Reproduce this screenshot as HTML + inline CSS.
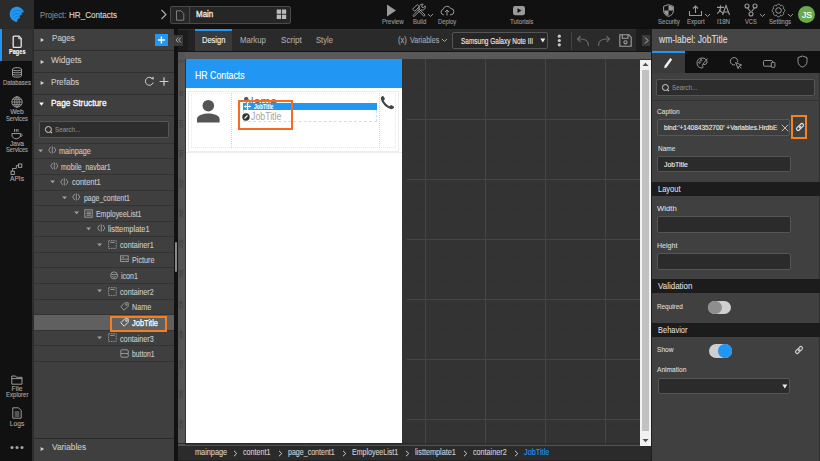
<!DOCTYPE html>
<html><head><meta charset="utf-8">
<style>
*{box-sizing:border-box;margin:0;padding:0}
html,body{width:820px;height:461px;overflow:hidden;background:#111;font-family:"Liberation Sans",sans-serif;position:relative}
.a{position:absolute}
.t{white-space:nowrap}
svg{overflow:visible}
</style></head><body>
<div class="a" style="left:0px;top:0px;width:820px;height:29px;background:#111;"></div>
<div class="a" style="left:0px;top:0px;width:34px;height:29px;background:#2b2b2b;"></div>
<div class="a" style="left:0px;top:29px;width:32px;height:432px;background:#111111;"></div>
<div class="a" style="left:32px;top:29px;width:2px;height:432px;background:#2e2e2e;"></div>
<div class="a" style="left:0px;top:29px;width:32px;height:32px;background:#333;"></div>
<div class="a" style="left:0px;top:29px;width:2px;height:32px;background:#2196f3;"></div>
<svg class="a" style="left:0px;top:0px;" width="34" height="29" viewBox="0 0 34 29"><path fill="#2196f3" d="M16.8 22 C13.5 21.5 10 18.8 9.7 14.5 C9.5 10 12.8 6.8 16.5 6.7 C20 6.6 23 9 24 12.3 C23 12 22 12.2 21.3 13 C21.6 13.6 22 14.4 22 15 C21 14.8 20 15.2 19.4 16 C19.8 16.8 20.1 17.5 20 18.2 C19 18 18.2 18.4 17.6 19 C17.8 20 17.6 21.2 16.8 22 Z"/><path d="M11.5 13.5 C13 10.5 17.5 9.5 22 11.5 M12.5 16.5 C14 13.5 17.5 12.8 20.5 14.5 M14 19 C15 16.5 17 16 18.8 17" stroke="#1a6fc0" stroke-width="0.6" fill="none"/></svg>
<div class="a t" style="left:39.90px;top:10.65px;font-size:8.86px;line-height:8.86px;color:#8a8a8a;transform:scaleX(0.879);transform-origin:0 0;-webkit-text-stroke:0.12px #8a8a8a;">Project:</div>
<div class="a t" style="left:68.80px;top:10.65px;font-size:8.86px;line-height:8.86px;color:#dadada;transform:scaleX(0.913);transform-origin:0 0;-webkit-text-stroke:0.12px #dadada;">HR_Contacts</div>
<svg class="a" style="left:160px;top:9px;" width="8" height="11" viewBox="0 0 8 11"><path d="M1.5 1 L6 5.5 L1.5 10" stroke="#aaa" stroke-width="1.2" fill="none"/></svg>
<div class="a" style="left:170px;top:6px;width:121px;height:17.5px;background:#262626;border:1px solid #4a4a4a;border-radius:2px;"></div>
<div class="a" style="left:189px;top:7px;width:1px;height:15.5px;background:#4a4a4a;"></div>
<svg class="a" style="left:175px;top:10px;" width="10" height="11" viewBox="0 0 10 11"><path d="M1.5 0.8 H6 L8.8 3.6 V10.2 H1.5 Z" stroke="#888" stroke-width="0.9" fill="none"/></svg>
<div class="a t" style="left:195.70px;top:10.38px;font-size:9.18px;line-height:9.18px;color:#f0f0f0;transform:scaleX(0.868);transform-origin:0 0;-webkit-text-stroke:0.3px #f0f0f0;">Main</div>
<svg class="a" style="left:276px;top:9px;" width="11" height="11" viewBox="0 0 11 11"><g fill="#bbb"><rect x="0.7" y="0.5" width="4.3" height="4.3"/><rect x="5.9" y="0.5" width="4.3" height="4.3"/><rect x="0.7" y="5.7" width="4.3" height="4.3"/><rect x="5.9" y="5.7" width="4.3" height="4.3"/></g></svg>
<svg class="a" style="left:386px;top:4px;" width="11" height="13" viewBox="0 0 11 13"><path d="M1 0.6 L10 6.5 L1 12.4 Z" fill="#9a9a9a"/></svg>
<div class="a t" style="left:381.60px;top:18.04px;font-size:7.34px;line-height:7.34px;color:#9a9a9a;transform:scaleX(0.827);transform-origin:0 0;-webkit-text-stroke:0.12px #9a9a9a;">Preview</div>
<svg class="a" style="left:412px;top:3.5px;" width="14" height="13" viewBox="0 0 14 13"><g stroke="#9a9a9a" stroke-width="0.95" fill="none" stroke-linejoin="round"><path d="M5.2 5.6 L11.9 12.3 L13.1 11.1 L6.4 4.4"/><path d="M0.6 5.2 L5.2 0.6 L7.3 2.7 L2.7 7.3 Z"/><path d="M7.6 4.8 L1.2 11.2 C0.9 11.6 0.9 12 1.3 12.3 C1.6 12.6 2 12.6 2.4 12.3 L8.8 5.9 C10.4 6.6 12.4 5.9 13.1 4.2 C13.4 3.4 13.4 2.6 13.1 1.9 L11.3 3.6 L9.9 3.2 L9.6 1.8 L11.3 0.4 C10.5 0.1 9.6 0.1 8.8 0.5 C7.3 1.3 6.8 3.3 7.6 4.8 Z"/></g></svg>
<svg class="a" style="left:427px;top:13px;" width="7" height="5" viewBox="0 0 7 5"><path d="M1 1 L3.5 3.5 L6 1" stroke="#9a9a9a" stroke-width="1" fill="none"/></svg>
<div class="a t" style="left:412.70px;top:18.04px;font-size:7.34px;line-height:7.34px;color:#9a9a9a;transform:scaleX(0.814);transform-origin:0 0;-webkit-text-stroke:0.12px #9a9a9a;">Build</div>
<svg class="a" style="left:440px;top:4px;" width="14" height="12" viewBox="0 0 14 12"><g stroke="#9a9a9a" stroke-width="1" fill="none"><path d="M4 10.8 H3.5 A2.8 2.8 0 0 1 3.2 5.3 A4 4 0 0 1 10.7 4.5 A3 3 0 0 1 10.8 10.8 H10"/><path d="M7 11.5 V6 M5 8 L7 6 L9 8"/></g></svg>
<div class="a t" style="left:437.70px;top:18.04px;font-size:7.34px;line-height:7.34px;color:#9a9a9a;transform:scaleX(0.800);transform-origin:0 0;-webkit-text-stroke:0.12px #9a9a9a;">Deploy</div>
<svg class="a" style="left:512px;top:5px;" width="14" height="11" viewBox="0 0 14 11"><rect x="1" y="1" width="12" height="9.2" rx="2.2" fill="#9a9a9a"/><path d="M5.5 3.3 L9.5 5.6 L5.5 7.9 Z" fill="#111"/></svg>
<div class="a t" style="left:509.60px;top:17.74px;font-size:7.34px;line-height:7.34px;color:#9a9a9a;transform:scaleX(0.843);transform-origin:0 0;-webkit-text-stroke:0.12px #9a9a9a;">Tutorials</div>
<svg class="a" style="left:662.5px;top:3.5px;" width="12" height="14" viewBox="0 0 12 14"><path d="M5.5 0.6 L10.4 2.3 V6.8 C10.4 9.8 8.2 11.6 5.5 12.4 C2.8 11.6 0.6 9.8 0.6 6.8 V2.3 Z" fill="none" stroke="#9a9a9a" stroke-width="1"/><path d="M5.5 1.2 L9.9 2.7 V6.6 H5.5 Z M5.5 6.6 V11.8 C3.2 11 1.3 9.5 1.1 6.6 Z" fill="#9a9a9a"/></svg>
<div class="a t" style="left:658.40px;top:18.14px;font-size:7.34px;line-height:7.34px;color:#9a9a9a;transform:scaleX(0.823);transform-origin:0 0;-webkit-text-stroke:0.12px #9a9a9a;">Security</div>
<svg class="a" style="left:688px;top:5px;" width="15" height="12" viewBox="0 0 15 12"><g stroke="#9a9a9a" stroke-width="1.1" fill="none"><path d="M1.5 6 V10.5 H13.5 V6"/><path d="M7.5 8 V1 M5 3.5 L7.5 1 L10 3.5"/></g></svg>
<svg class="a" style="left:704px;top:13px;" width="7" height="5" viewBox="0 0 7 5"><path d="M1 1 L3.5 3.5 L6 1" stroke="#9a9a9a" stroke-width="1" fill="none"/></svg>
<div class="a t" style="left:687.20px;top:18.14px;font-size:7.34px;line-height:7.34px;color:#9a9a9a;transform:scaleX(0.830);transform-origin:0 0;-webkit-text-stroke:0.12px #9a9a9a;">Export</div>
<svg class="a" style="left:716px;top:4px;" width="15" height="12" viewBox="0 0 15 12"><g stroke="#9a9a9a" stroke-width="1.1" fill="none" stroke-linejoin="miter"><path d="M1 3.4 H8 M4.5 1.2 V3.4 M4.6 3.4 C4.2 6.5 3 8.6 1 9.6 M3.2 5.6 C4.6 7.6 6.2 8.8 7.6 9.4"/><path d="M6.6 11 L10 1.6 L13.6 11 M7.8 8 H12.4"/></g></svg>
<div class="a t" style="left:717.00px;top:18.14px;font-size:7.34px;line-height:7.34px;color:#9a9a9a;transform:scaleX(0.846);transform-origin:0 0;-webkit-text-stroke:0.12px #9a9a9a;">I18N</div>
<svg class="a" style="left:744px;top:3px;" width="14" height="14" viewBox="0 0 14 14"><g stroke="#9a9a9a" stroke-width="1.1" fill="none"><circle cx="3" cy="3" r="2"/><circle cx="11" cy="3" r="2"/><circle cx="7" cy="11" r="2"/><path d="M3.5 5 L6.5 8.5 M10.5 5 L7.5 8.5"/></g></svg>
<svg class="a" style="left:759px;top:13px;" width="7" height="5" viewBox="0 0 7 5"><path d="M1 1 L3.5 3.5 L6 1" stroke="#9a9a9a" stroke-width="1" fill="none"/></svg>
<div class="a t" style="left:745.40px;top:18.14px;font-size:7.34px;line-height:7.34px;color:#9a9a9a;transform:scaleX(0.776);transform-origin:0 0;-webkit-text-stroke:0.12px #9a9a9a;">VCS</div>
<svg class="a" style="left:771px;top:2.5px;" width="15" height="15" viewBox="0 0 15 15"><g stroke="#9a9a9a" stroke-width="1" fill="none" stroke-linejoin="round"><path d="M13.80 7.50 L13.78 7.77 L13.74 8.05 L13.66 8.31 L13.54 8.57 L13.40 8.81 L13.22 9.03 L12.99 9.23 L12.71 9.40 L12.12 9.41 L12.52 9.84 L12.61 10.16 L12.63 10.46 L12.60 10.75 L12.53 11.02 L12.43 11.28 L12.30 11.52 L12.14 11.75 L11.95 11.95 L11.75 12.14 L11.52 12.30 L11.28 12.43 L11.02 12.53 L10.75 12.60 L10.46 12.63 L10.16 12.61 L9.84 12.52 L9.41 12.12 L9.40 12.71 L9.23 12.99 L9.03 13.22 L8.81 13.40 L8.57 13.54 L8.31 13.66 L8.05 13.74 L7.77 13.78 L7.50 13.80 L7.23 13.78 L6.95 13.74 L6.69 13.66 L6.43 13.54 L6.19 13.40 L5.97 13.22 L5.77 12.99 L5.60 12.71 L5.59 12.12 L5.16 12.52 L4.84 12.61 L4.54 12.63 L4.25 12.60 L3.98 12.53 L3.72 12.43 L3.48 12.30 L3.25 12.14 L3.05 11.95 L2.86 11.75 L2.70 11.52 L2.57 11.28 L2.47 11.02 L2.40 10.75 L2.37 10.46 L2.39 10.16 L2.48 9.84 L2.88 9.41 L2.29 9.40 L2.01 9.23 L1.78 9.03 L1.60 8.81 L1.46 8.57 L1.34 8.31 L1.26 8.05 L1.22 7.77 L1.20 7.50 L1.22 7.23 L1.26 6.95 L1.34 6.69 L1.46 6.43 L1.60 6.19 L1.78 5.97 L2.01 5.77 L2.29 5.60 L2.88 5.59 L2.48 5.16 L2.39 4.84 L2.37 4.54 L2.40 4.25 L2.47 3.98 L2.57 3.72 L2.70 3.48 L2.86 3.25 L3.05 3.05 L3.25 2.86 L3.48 2.70 L3.72 2.57 L3.98 2.47 L4.25 2.40 L4.54 2.37 L4.84 2.39 L5.16 2.48 L5.59 2.88 L5.60 2.29 L5.77 2.01 L5.97 1.78 L6.19 1.60 L6.43 1.46 L6.69 1.34 L6.95 1.26 L7.23 1.22 L7.50 1.20 L7.77 1.22 L8.05 1.26 L8.31 1.34 L8.57 1.46 L8.81 1.60 L9.03 1.78 L9.23 2.01 L9.40 2.29 L9.41 2.88 L9.84 2.48 L10.16 2.39 L10.46 2.37 L10.75 2.40 L11.02 2.47 L11.28 2.57 L11.52 2.70 L11.75 2.86 L11.95 3.05 L12.14 3.25 L12.30 3.48 L12.43 3.72 L12.53 3.98 L12.60 4.25 L12.63 4.54 L12.61 4.84 L12.52 5.16 L12.12 5.59 L12.71 5.60 L12.99 5.77 L13.22 5.97 L13.40 6.19 L13.54 6.43 L13.66 6.69 L13.74 6.95 L13.78 7.23 L13.80 7.50Z"/><circle cx="7.5" cy="7.5" r="2.8"/></g></svg>
<svg class="a" style="left:787px;top:13px;" width="7" height="5" viewBox="0 0 7 5"><path d="M1 1 L3.5 3.5 L6 1" stroke="#9a9a9a" stroke-width="1" fill="none"/></svg>
<div class="a t" style="left:769.00px;top:18.14px;font-size:7.34px;line-height:7.34px;color:#9a9a9a;transform:scaleX(0.837);transform-origin:0 0;-webkit-text-stroke:0.12px #9a9a9a;">Settings</div>
<svg class="a" style="left:797px;top:5px;" width="19" height="19" viewBox="0 0 19 19"><circle cx="9.5" cy="9.5" r="8.5" fill="#6aaa4c"/></svg>
<div class="a t" style="left:801.50px;top:11.37px;font-size:9.07px;line-height:9.07px;color:#fff;transform:scaleX(0.946);transform-origin:0 0;-webkit-text-stroke:0.2px #fff;">JS</div>
<svg class="a" style="left:11px;top:35px;" width="12" height="14" viewBox="0 0 12 14"><path d="M2.2 2 C2.2 1.5 2.5 1.2 3 1.2 H8 L10.2 3.4 V11.6 C10.2 12.1 9.9 12.4 9.4 12.4 H3 C2.5 12.4 2.2 12.1 2.2 11.6 Z" fill="none" stroke="#e8e8e8" stroke-width="1.3"/><path d="M7.6 1.5 V3.8 H10" fill="none" stroke="#e8e8e8" stroke-width="0.8"/></svg>
<div class="a t" style="left:8.75px;top:49.21px;font-size:7.13px;line-height:7.13px;color:#fff;font-weight:bold;transform:scaleX(0.786);transform-origin:0 0;-webkit-text-stroke:0.12px #fff;">Pages</div>
<svg class="a" style="left:11px;top:67px;" width="12" height="11" viewBox="0 0 12 11"><g stroke="#a8a8a8" stroke-width="0.9" fill="none"><ellipse cx="6" cy="2.2" rx="4.5" ry="1.6"/><path d="M1.5 2.2 V8.8 C1.5 10.6 10.5 10.6 10.5 8.8 V2.2"/><path d="M1.5 4.6 C1.5 6.2 10.5 6.2 10.5 4.6 M1.5 6.8 C1.5 8.4 10.5 8.4 10.5 6.8"/></g></svg>
<div class="a t" style="left:3.00px;top:80.28px;font-size:6.7px;line-height:6.7px;color:#a8a8a8;transform:scaleX(0.874);transform-origin:0 0;-webkit-text-stroke:0.12px #a8a8a8;">Databases</div>
<svg class="a" style="left:11px;top:96px;" width="12" height="12" viewBox="0 0 12 12"><g stroke="#a8a8a8" stroke-width="0.8" fill="none"><circle cx="6" cy="6" r="5.2"/><ellipse cx="6" cy="6" rx="2.3" ry="5.2"/><path d="M0.8 6 H11.2 M1.6 3.3 H10.4 M1.6 8.7 H10.4 M6 0.8 V11.2"/></g></svg>
<div class="a t" style="left:10.17px;top:108.58px;font-size:6.7px;line-height:6.7px;color:#a8a8a8;-webkit-text-stroke:0.12px #a8a8a8;">Web</div>
<div class="a t" style="left:6.00px;top:115.58px;font-size:6.7px;line-height:6.7px;color:#a8a8a8;transform:scaleX(0.856);transform-origin:0 0;-webkit-text-stroke:0.12px #a8a8a8;">Services</div>
<svg class="a" style="left:10px;top:128px;" width="14" height="12" viewBox="0 0 14 12"><g stroke="#a8a8a8" stroke-width="0.9" fill="none"><path d="M2 5.5 H10.5 V7 C10.5 9.5 8.5 10.8 6.2 10.8 C4 10.8 2 9.5 2 7 Z"/><path d="M10.5 6 C12.8 6 12.8 8.6 10.2 8.6"/><path d="M4.5 1 V3.8 M6.3 1 V3.8 M8 1 V3.8"/></g></svg>
<div class="a t" style="left:9.91px;top:141.08px;font-size:6.7px;line-height:6.7px;color:#a8a8a8;-webkit-text-stroke:0.12px #a8a8a8;">Java</div>
<div class="a t" style="left:6.00px;top:147.48px;font-size:6.7px;line-height:6.7px;color:#a8a8a8;transform:scaleX(0.856);transform-origin:0 0;-webkit-text-stroke:0.12px #a8a8a8;">Services</div>
<svg class="a" style="left:10px;top:163px;" width="13" height="13" viewBox="0 0 13 13"><g stroke="#a8a8a8" stroke-width="0.9" fill="none"><rect x="1" y="8.2" width="3.3" height="3.3"/><rect x="8.5" y="1" width="3.3" height="3.3"/><path d="M2.6 8.2 V5.5 H6.3 V2.6 H8.5"/></g></svg>
<div class="a t" style="left:9.93px;top:176.28px;font-size:6.7px;line-height:6.7px;color:#a8a8a8;-webkit-text-stroke:0.12px #a8a8a8;">APIs</div>
<svg class="a" style="left:11px;top:375px;" width="12" height="10" viewBox="0 0 12 10"><path d="M0.8 1 H4.5 L5.5 2.3 H11 V9.2 H0.8 Z M0.8 3.6 H11" fill="none" stroke="#a8a8a8" stroke-width="0.9"/></svg>
<div class="a t" style="left:11.61px;top:385.98px;font-size:6.7px;line-height:6.7px;color:#a8a8a8;-webkit-text-stroke:0.12px #a8a8a8;">File</div>
<div class="a t" style="left:5.75px;top:392.28px;font-size:6.7px;line-height:6.7px;color:#a8a8a8;transform:scaleX(0.902);transform-origin:0 0;-webkit-text-stroke:0.12px #a8a8a8;">Explorer</div>
<svg class="a" style="left:12px;top:407px;" width="10" height="12" viewBox="0 0 10 12"><g stroke="#a8a8a8" stroke-width="0.9" fill="none"><path d="M0.8 0.8 H6.5 L9.2 3.5 V11.2 H0.8 Z"/><path d="M2.7 5 H7.3 M2.7 7 H7.3 M2.7 9 H7.3"/></g></svg>
<div class="a t" style="left:9.73px;top:420.98px;font-size:6.7px;line-height:6.7px;color:#a8a8a8;-webkit-text-stroke:0.12px #a8a8a8;">Logs</div>
<svg class="a" style="left:10px;top:445px;" width="14" height="5" viewBox="0 0 14 5"><g fill="#a8a8a8"><circle cx="2" cy="2.5" r="1.5"/><circle cx="7" cy="2.5" r="1.5"/><circle cx="12" cy="2.5" r="1.5"/></g></svg>
<div class="a" style="left:34px;top:29px;width:140px;height:432px;background:#3f3f3f;"></div>
<div class="a" style="left:34px;top:50px;width:140px;height:1px;background:#2f2f2f;"></div>
<div class="a" style="left:34px;top:72px;width:140px;height:1px;background:#2f2f2f;"></div>
<div class="a" style="left:34px;top:93.5px;width:140px;height:1px;background:#2f2f2f;"></div>
<div class="a" style="left:34px;top:115px;width:140px;height:1px;background:#2f2f2f;"></div>
<svg class="a" style="left:40px;top:36.5px;" width="5" height="6" viewBox="0 0 5 6"><path d="M0.6 0.9 L4.2 3 L0.6 5.1 Z" fill="#d0d0d0"/></svg>
<div class="a t" style="left:51.60px;top:34.29px;font-size:9.29px;line-height:9.29px;color:#c8c8c8;transform:scaleX(0.869);transform-origin:0 0;-webkit-text-stroke:0.12px #c8c8c8;">Pages</div>
<div class="a" style="left:155.3px;top:33.7px;width:12.7px;height:12px;background:#2196f3;"></div>
<svg class="a" style="left:155.3px;top:33.7px;" width="13" height="12" viewBox="0 0 13 12"><path d="M6.4 2.5 V9.5 M2.9 6 H9.9" stroke="#fff" stroke-width="1.4"/></svg>
<svg class="a" style="left:40px;top:58.5px;" width="5" height="6" viewBox="0 0 5 6"><path d="M0.6 0.9 L4.2 3 L0.6 5.1 Z" fill="#d0d0d0"/></svg>
<div class="a t" style="left:51.30px;top:55.89px;font-size:9.29px;line-height:9.29px;color:#c8c8c8;transform:scaleX(0.909);transform-origin:0 0;-webkit-text-stroke:0.12px #c8c8c8;">Widgets</div>
<svg class="a" style="left:40px;top:80px;" width="5" height="6" viewBox="0 0 5 6"><path d="M0.6 0.9 L4.2 3 L0.6 5.1 Z" fill="#d0d0d0"/></svg>
<div class="a t" style="left:51.30px;top:77.59px;font-size:9.29px;line-height:9.29px;color:#c8c8c8;transform:scaleX(0.875);transform-origin:0 0;-webkit-text-stroke:0.12px #c8c8c8;">Prefabs</div>
<svg class="a" style="left:144px;top:76px;" width="11" height="10" viewBox="0 0 11 10"><path d="M8.8 3.2 A4 4 0 1 0 9.2 6.5" stroke="#ccc" stroke-width="1" fill="none"/><path d="M6.6 2.8 L9.6 3.6 L9.6 0.6 Z" fill="#ccc"/></svg>
<svg class="a" style="left:158.5px;top:76.5px;" width="10" height="9" viewBox="0 0 10 9"><path d="M5 0.3 V8.7 M0.6 4.5 H9.4" stroke="#ccc" stroke-width="1.2"/></svg>
<svg class="a" style="left:38.5px;top:101.5px;" width="5" height="4" viewBox="0 0 5 4"><path d="M0.2 0.5 H4.8 L2.5 3.8 Z" fill="#fff"/></svg>
<div class="a t" style="left:51.30px;top:98.31px;font-size:9.5px;line-height:9.5px;color:#ffffff;transform:scaleX(0.876);transform-origin:0 0;-webkit-text-stroke:0.3px #fff;">Page Structure</div>
<div class="a" style="left:39px;top:121.3px;width:130px;height:16.4px;background:#2d2d2d;border:1px solid #555;border-radius:2px;"></div>
<svg class="a" style="left:44px;top:125px;" width="9" height="9" viewBox="0 0 9 9"><circle cx="4.4" cy="4.5" r="3" stroke="#d0d0d0" stroke-width="1" fill="none"/><path d="M6.4 6.6 L8 8.2" stroke="#d0d0d0" stroke-width="1.1"/></svg>
<div class="a t" style="left:54.80px;top:125.69px;font-size:7.99px;line-height:7.99px;color:#8c8c8c;transform:scaleX(0.788);transform-origin:0 0;-webkit-text-stroke:0.12px #8c8c8c;">Search...</div>
<div class="a" style="left:34px;top:143.3px;width:140px;height:1px;background:#333;"></div>
<div class="a" style="left:34px;top:158.37px;width:140px;height:1px;background:#333;"></div>
<svg class="a" style="left:37.800000000000004px;top:149.20000000000002px;" width="5.2" height="4" viewBox="0 0 5.2 4"><path d="M0.2 0.5 H5.0 L2.6 3.2 Z" fill="#a0a0a0"/></svg>
<svg class="a" style="left:48.4px;top:146.4px;" width="9" height="8" viewBox="0 0 9 8"><g stroke="#a0a0a0" stroke-width="0.85" fill="none"><path d="M2.7 1 L0.7 4 L2.7 7 M5.9 1 L7.9 4 L5.9 7 M4.3 0.3 V7.6"/></g></svg>
<div class="a t" style="left:59.30px;top:147.01px;font-size:8.32px;line-height:8.32px;color:#c8c8c8;transform:scaleX(0.871);transform-origin:0 0;-webkit-text-stroke:0.12px #c8c8c8;">mainpage</div>
<div class="a" style="left:34px;top:173.94px;width:140px;height:1px;background:#333;"></div>
<svg class="a" style="left:50px;top:161.97px;" width="9" height="8" viewBox="0 0 9 8"><g stroke="#a0a0a0" stroke-width="0.85" fill="none"><path d="M2.7 1 L0.7 4 L2.7 7 M5.9 1 L7.9 4 L5.9 7 M4.3 0.3 V7.6"/></g></svg>
<div class="a t" style="left:60.80px;top:162.65px;font-size:8.32px;line-height:8.32px;color:#c8c8c8;transform:scaleX(0.841);transform-origin:0 0;-webkit-text-stroke:0.12px #c8c8c8;">mobile_navbar1</div>
<div class="a" style="left:34px;top:189.51px;width:140px;height:1px;background:#333;"></div>
<svg class="a" style="left:49.6px;top:180.34px;" width="5.2" height="4" viewBox="0 0 5.2 4"><path d="M0.2 0.5 H5.0 L2.6 3.2 Z" fill="#a0a0a0"/></svg>
<svg class="a" style="left:60.3px;top:177.54px;" width="9" height="8" viewBox="0 0 9 8"><g stroke="#a0a0a0" stroke-width="0.85" fill="none"><path d="M2.7 1 L0.7 4 L2.7 7 M5.9 1 L7.9 4 L5.9 7 M4.3 0.3 V7.6"/></g></svg>
<div class="a t" style="left:71.60px;top:178.29px;font-size:8.32px;line-height:8.32px;color:#c8c8c8;transform:scaleX(0.903);transform-origin:0 0;-webkit-text-stroke:0.12px #c8c8c8;">content1</div>
<div class="a" style="left:34px;top:205.08px;width:140px;height:1px;background:#333;"></div>
<svg class="a" style="left:61.7px;top:195.91000000000003px;" width="5.2" height="4" viewBox="0 0 5.2 4"><path d="M0.2 0.5 H5.0 L2.6 3.2 Z" fill="#a0a0a0"/></svg>
<svg class="a" style="left:72.3px;top:193.11px;" width="9" height="8" viewBox="0 0 9 8"><g stroke="#a0a0a0" stroke-width="0.85" fill="none"><path d="M2.7 1 L0.7 4 L2.7 7 M5.9 1 L7.9 4 L5.9 7 M4.3 0.3 V7.6"/></g></svg>
<div class="a t" style="left:83.50px;top:193.93px;font-size:8.32px;line-height:8.32px;color:#c8c8c8;transform:scaleX(0.836);transform-origin:0 0;-webkit-text-stroke:0.12px #c8c8c8;">page_content1</div>
<div class="a" style="left:34px;top:220.65px;width:140px;height:1px;background:#333;"></div>
<svg class="a" style="left:74.0px;top:211.48000000000002px;" width="5.2" height="4" viewBox="0 0 5.2 4"><path d="M0.2 0.5 H5.0 L2.6 3.2 Z" fill="#a0a0a0"/></svg>
<svg class="a" style="left:84.2px;top:208.68px;" width="9" height="9" viewBox="0 0 9 9"><g stroke="#a0a0a0" stroke-width="0.9" fill="none"><rect x="0.8" y="0.8" width="7.4" height="7.4"/><path d="M2.5 3 H7 M2.5 4.6 H7 M2.5 6.2 H7"/></g></svg>
<div class="a t" style="left:95.50px;top:209.57px;font-size:8.32px;line-height:8.32px;color:#c8c8c8;transform:scaleX(0.834);transform-origin:0 0;-webkit-text-stroke:0.12px #c8c8c8;">EmployeeList1</div>
<div class="a" style="left:34px;top:236.22px;width:140px;height:1px;background:#333;"></div>
<svg class="a" style="left:86.0px;top:227.05px;" width="5.2" height="4" viewBox="0 0 5.2 4"><path d="M0.2 0.5 H5.0 L2.6 3.2 Z" fill="#a0a0a0"/></svg>
<svg class="a" style="left:96.8px;top:224.25px;" width="9" height="8" viewBox="0 0 9 8"><g stroke="#a0a0a0" stroke-width="0.85" fill="none"><path d="M2.7 1 L0.7 4 L2.7 7 M5.9 1 L7.9 4 L5.9 7 M4.3 0.3 V7.6"/></g></svg>
<div class="a t" style="left:107.60px;top:225.21px;font-size:8.32px;line-height:8.32px;color:#c8c8c8;transform:scaleX(0.890);transform-origin:0 0;-webkit-text-stroke:0.12px #c8c8c8;">listtemplate1</div>
<div class="a" style="left:34px;top:251.79000000000002px;width:140px;height:1px;background:#333;"></div>
<svg class="a" style="left:97.3px;top:242.62000000000003px;" width="5.2" height="4" viewBox="0 0 5.2 4"><path d="M0.2 0.5 H5.0 L2.6 3.2 Z" fill="#a0a0a0"/></svg>
<svg class="a" style="left:108.4px;top:239.82000000000002px;" width="9" height="9" viewBox="0 0 9 9"><g stroke="#a0a0a0" stroke-width="0.8" fill="none"><rect x="0.6" y="0.6" width="7.6" height="7.8" stroke-dasharray="1.6 0.8"/><path d="M2.2 2.4 H6.6" stroke-width="0.9"/></g></svg>
<div class="a t" style="left:119.70px;top:240.85px;font-size:8.32px;line-height:8.32px;color:#c8c8c8;transform:scaleX(0.870);transform-origin:0 0;-webkit-text-stroke:0.12px #c8c8c8;">container1</div>
<div class="a" style="left:34px;top:267.36px;width:140px;height:1px;background:#333;"></div>
<svg class="a" style="left:120.2px;top:255.39000000000001px;" width="9" height="8" viewBox="0 0 9 8"><g stroke="#a0a0a0" stroke-width="0.85" fill="none"><rect x="0.6" y="0.8" width="7.6" height="5.8"/><path d="M0.6 4.2 H8.2 M2 2.4 H4"/></g></svg>
<div class="a t" style="left:131.50px;top:256.49px;font-size:8.32px;line-height:8.32px;color:#c8c8c8;transform:scaleX(0.870);transform-origin:0 0;-webkit-text-stroke:0.12px #c8c8c8;">Picture</div>
<div class="a" style="left:34px;top:282.93px;width:140px;height:1px;background:#333;"></div>
<svg class="a" style="left:109.8px;top:270.96000000000004px;" width="9" height="9" viewBox="0 0 9 9"><g stroke="#a0a0a0" stroke-width="0.85" fill="none"><circle cx="4.1" cy="4.4" r="3.5"/><path d="M1.2 3.6 H7 M2.4 5.4 C3.2 6.4 5 6.4 5.8 5.4"/></g></svg>
<div class="a t" style="left:120.80px;top:272.13px;font-size:8.32px;line-height:8.32px;color:#c8c8c8;transform:scaleX(0.850);transform-origin:0 0;-webkit-text-stroke:0.12px #c8c8c8;">icon1</div>
<div class="a" style="left:34px;top:298.5px;width:140px;height:1px;background:#333;"></div>
<svg class="a" style="left:97.3px;top:289.33px;" width="5.2" height="4" viewBox="0 0 5.2 4"><path d="M0.2 0.5 H5.0 L2.6 3.2 Z" fill="#a0a0a0"/></svg>
<svg class="a" style="left:108.4px;top:286.53000000000003px;" width="9" height="9" viewBox="0 0 9 9"><g stroke="#a0a0a0" stroke-width="0.8" fill="none"><rect x="0.6" y="0.6" width="7.6" height="7.8" stroke-dasharray="1.6 0.8"/><path d="M2.2 2.4 H6.6" stroke-width="0.9"/></g></svg>
<div class="a t" style="left:119.70px;top:287.77px;font-size:8.32px;line-height:8.32px;color:#c8c8c8;transform:scaleX(0.870);transform-origin:0 0;-webkit-text-stroke:0.12px #c8c8c8;">container2</div>
<div class="a" style="left:34px;top:314.07px;width:140px;height:1px;background:#333;"></div>
<svg class="a" style="left:120.2px;top:302.1px;" width="9" height="9" viewBox="0 0 9 9"><g stroke="#a0a0a0" stroke-width="0.9" fill="none"><path d="M4.8 0.8 H8.2 V4.2 L4.2 8.2 L0.8 4.8 Z"/><circle cx="6.3" cy="2.7" r="0.7"/></g></svg>
<div class="a t" style="left:131.50px;top:303.41px;font-size:8.32px;line-height:8.32px;color:#c8c8c8;transform:scaleX(0.864);transform-origin:0 0;-webkit-text-stroke:0.12px #c8c8c8;">Name</div>
<div class="a" style="left:34px;top:314.57000000000005px;width:140px;height:15.57px;background:#606060;"></div>
<div class="a" style="left:34px;top:329.64000000000004px;width:140px;height:1px;background:#333;"></div>
<svg class="a" style="left:120.2px;top:317.6700000000001px;" width="9" height="9" viewBox="0 0 9 9"><g stroke="#eee" stroke-width="0.9" fill="none"><path d="M4.8 0.8 H8.2 V4.2 L4.2 8.2 L0.8 4.8 Z"/><circle cx="6.3" cy="2.7" r="0.7"/></g></svg>
<div class="a t" style="left:131.50px;top:318.87px;font-size:8.53px;line-height:8.53px;color:#ffffff;transform:scaleX(0.880);transform-origin:0 0;-webkit-text-stroke:0.25px #fff;">JobTitle</div>
<div class="a" style="left:34px;top:345.21px;width:140px;height:1px;background:#333;"></div>
<svg class="a" style="left:97.3px;top:336.03999999999996px;" width="5.2" height="4" viewBox="0 0 5.2 4"><path d="M0.2 0.5 H5.0 L2.6 3.2 Z" fill="#a0a0a0"/></svg>
<svg class="a" style="left:108.4px;top:333.24px;" width="9" height="9" viewBox="0 0 9 9"><g stroke="#a0a0a0" stroke-width="0.8" fill="none"><rect x="0.6" y="0.6" width="7.6" height="7.8" stroke-dasharray="1.6 0.8"/><path d="M2.2 2.4 H6.6" stroke-width="0.9"/></g></svg>
<div class="a t" style="left:119.70px;top:334.69px;font-size:8.32px;line-height:8.32px;color:#c8c8c8;transform:scaleX(0.870);transform-origin:0 0;-webkit-text-stroke:0.12px #c8c8c8;">container3</div>
<div class="a" style="left:34px;top:360.78000000000003px;width:140px;height:1px;background:#333;"></div>
<svg class="a" style="left:120.2px;top:348.81000000000006px;" width="9" height="9" viewBox="0 0 9 9"><g stroke="#a0a0a0" stroke-width="0.9" fill="none"><rect x="0.8" y="0.8" width="7.4" height="7.4" rx="0.8"/><path d="M0.8 4.5 H8.2"/></g></svg>
<div class="a t" style="left:131.50px;top:350.33px;font-size:8.32px;line-height:8.32px;color:#c8c8c8;transform:scaleX(0.814);transform-origin:0 0;-webkit-text-stroke:0.12px #c8c8c8;">button1</div>
<div class="a" style="left:110.3px;top:315.9px;width:57px;height:16.4px;background:transparent;border:2px solid #f4801f;"></div>
<div class="a" style="left:34px;top:437.6px;width:140px;height:1px;background:#2a2a2a;"></div>
<svg class="a" style="left:40px;top:445.5px;" width="5" height="6" viewBox="0 0 5 6"><path d="M0.6 0.9 L4.2 3 L0.6 5.1 Z" fill="#d0d0d0"/></svg>
<div class="a t" style="left:51.50px;top:443.29px;font-size:9.29px;line-height:9.29px;color:#c8c8c8;transform:scaleX(0.896);transform-origin:0 0;-webkit-text-stroke:0.12px #c8c8c8;">Variables</div>
<div class="a" style="left:174px;top:29px;width:4px;height:432px;background:#121212;"></div>
<div class="a" style="left:174.7px;top:241.7px;width:2.5px;height:30.6px;background:#8a8a8a;border-radius:1px;"></div>
<div class="a" style="left:178px;top:29px;width:473px;height:22px;background:#1d1d1d;"></div>
<div class="a" style="left:186px;top:29px;width:450px;height:22px;background:#2a2a2a;"></div>
<div class="a" style="left:178px;top:29px;width:16.8px;height:22px;background:#1c1c1c;"></div>
<div class="a" style="left:188px;top:29px;width:6.8px;height:22px;background:#232323;"></div>
<div class="a" style="left:178px;top:29px;width:458px;height:1px;background:#303030;"></div>
<div class="a" style="left:174px;top:35px;width:9px;height:11px;background:#3a3a3a;"></div>
<svg class="a" style="left:175px;top:36px;" width="8" height="9" viewBox="0 0 8 9"><path d="M3.3 1.5 L1 4 L3.3 6.5 M5.9 1.5 L3.6 4 L5.9 6.5" stroke="#b4b4b4" stroke-width="0.9" fill="none"/></svg>
<div class="a" style="left:194.8px;top:29px;width:37px;height:22px;background:#3a3a3a;"></div>
<div class="a" style="left:194.8px;top:29px;width:37px;height:2px;background:#2196f3;"></div>
<div class="a t" style="left:201.60px;top:35.88px;font-size:9.18px;line-height:9.18px;color:#f5f5f5;transform:scaleX(0.818);transform-origin:0 0;-webkit-text-stroke:0.12px #f5f5f5;">Design</div>
<div class="a t" style="left:240.20px;top:35.88px;font-size:9.18px;line-height:9.18px;color:#a8a8a8;transform:scaleX(0.843);transform-origin:0 0;-webkit-text-stroke:0.12px #a8a8a8;">Markup</div>
<div class="a t" style="left:281.00px;top:35.88px;font-size:9.18px;line-height:9.18px;color:#a8a8a8;transform:scaleX(0.883);transform-origin:0 0;-webkit-text-stroke:0.12px #a8a8a8;">Script</div>
<div class="a t" style="left:316.30px;top:35.88px;font-size:9.18px;line-height:9.18px;color:#a8a8a8;transform:scaleX(0.832);transform-origin:0 0;-webkit-text-stroke:0.12px #a8a8a8;">Style</div>
<div class="a t" style="left:397.80px;top:35.64px;font-size:8.64px;line-height:8.64px;color:#a8a8a8;transform:scaleX(0.874);transform-origin:0 0;-webkit-text-stroke:0.12px #a8a8a8;">(x)</div>
<div class="a t" style="left:409.50px;top:35.88px;font-size:9.18px;line-height:9.18px;color:#a8a8a8;transform:scaleX(0.779);transform-origin:0 0;-webkit-text-stroke:0.12px #a8a8a8;">Variables</div>
<svg class="a" style="left:441px;top:38px;" width="7" height="5" viewBox="0 0 7 5"><path d="M1 1 L3.5 3.5 L6 1" stroke="#aaa" stroke-width="1" fill="none"/></svg>
<div class="a" style="left:452px;top:31.5px;width:95.7px;height:17.3px;background:#262626;border:1px solid #555;border-radius:2px;"></div>
<div class="a t" style="left:461.20px;top:36.61px;font-size:8.32px;line-height:8.32px;color:#f0f0f0;transform:scaleX(0.781);transform-origin:0 0;-webkit-text-stroke:0.1px #f0f0f0;">Samsung Galaxy Note III</div>
<svg class="a" style="left:539.5px;top:37.5px;" width="6" height="5" viewBox="0 0 6 5"><path d="M0.3 0.5 H5.3 L2.8 4.5 Z" fill="#eee"/></svg>
<svg class="a" style="left:556px;top:34px;" width="7" height="13" viewBox="0 0 7 13"><g fill="#c8c8c8"><circle cx="3.3" cy="2.2" r="1.6"/><circle cx="3.3" cy="6.5" r="1.6"/><circle cx="3.3" cy="10.8" r="1.6"/></g></svg>
<div class="a" style="left:571px;top:32px;width:1px;height:17.5px;background:#444;"></div>
<svg class="a" style="left:576px;top:35px;" width="14" height="12" viewBox="0 0 14 12"><path d="M12.5 11 C12.5 6 9.5 4 5 4 H1.8 M4.5 1 L1.5 4 L4.5 7" stroke="#6a6a6a" stroke-width="1.1" fill="none"/></svg>
<svg class="a" style="left:597px;top:35px;" width="14" height="12" viewBox="0 0 14 12"><path d="M1.5 11 C1.5 6 4.5 4 9 4 H12.2 M9.5 1 L12.5 4 L9.5 7" stroke="#6a6a6a" stroke-width="1.1" fill="none"/></svg>
<svg class="a" style="left:618.5px;top:34px;" width="13" height="13" viewBox="0 0 13 13"><g stroke="#a0a0a0" stroke-width="1.1" fill="none"><path d="M0.8 0.8 H9.8 L12.2 3.2 V12.2 H0.8 Z"/><path d="M3.3 0.8 V4.2 H9 V0.8"/><circle cx="6.5" cy="8.3" r="1.6"/></g></svg>
<div class="a" style="left:642.3px;top:35px;width:8.2px;height:10.8px;background:#3a3a3a;"></div>
<svg class="a" style="left:643px;top:36px;" width="8" height="9" viewBox="0 0 8 9"><path d="M2 1.5 L5 4.5 L2 7.5" stroke="#bbb" stroke-width="1" fill="none"/></svg>
<div class="a" style="left:178px;top:51px;width:473px;height:394px;background:#333333;"></div>
<div class="a" style="left:407px;top:71px;width:233px;height:1px;background:#353535"></div>
<div class="a" style="left:407px;top:83px;width:233px;height:1px;background:#353535"></div>
<div class="a" style="left:407px;top:95px;width:233px;height:1px;background:#353535"></div>
<div class="a" style="left:407px;top:107px;width:233px;height:1px;background:#353535"></div>
<div class="a" style="left:407px;top:131px;width:233px;height:1px;background:#353535"></div>
<div class="a" style="left:407px;top:143px;width:233px;height:1px;background:#353535"></div>
<div class="a" style="left:407px;top:155px;width:233px;height:1px;background:#353535"></div>
<div class="a" style="left:407px;top:167px;width:233px;height:1px;background:#353535"></div>
<div class="a" style="left:407px;top:191px;width:233px;height:1px;background:#353535"></div>
<div class="a" style="left:407px;top:203px;width:233px;height:1px;background:#353535"></div>
<div class="a" style="left:407px;top:215px;width:233px;height:1px;background:#353535"></div>
<div class="a" style="left:407px;top:227px;width:233px;height:1px;background:#353535"></div>
<div class="a" style="left:407px;top:251px;width:233px;height:1px;background:#353535"></div>
<div class="a" style="left:407px;top:263px;width:233px;height:1px;background:#353535"></div>
<div class="a" style="left:407px;top:275px;width:233px;height:1px;background:#353535"></div>
<div class="a" style="left:407px;top:287px;width:233px;height:1px;background:#353535"></div>
<div class="a" style="left:407px;top:311px;width:233px;height:1px;background:#353535"></div>
<div class="a" style="left:407px;top:323px;width:233px;height:1px;background:#353535"></div>
<div class="a" style="left:407px;top:335px;width:233px;height:1px;background:#353535"></div>
<div class="a" style="left:407px;top:347px;width:233px;height:1px;background:#353535"></div>
<div class="a" style="left:407px;top:371px;width:233px;height:1px;background:#353535"></div>
<div class="a" style="left:407px;top:383px;width:233px;height:1px;background:#353535"></div>
<div class="a" style="left:407px;top:395px;width:233px;height:1px;background:#353535"></div>
<div class="a" style="left:407px;top:407px;width:233px;height:1px;background:#353535"></div>
<div class="a" style="left:407px;top:431px;width:233px;height:1px;background:#353535"></div>
<div class="a" style="left:407px;top:443px;width:233px;height:1px;background:#353535"></div>
<div class="a" style="left:197px;top:59px;width:1px;height:386px;background:#343434"></div>
<div class="a" style="left:209px;top:59px;width:1px;height:386px;background:#343434"></div>
<div class="a" style="left:221px;top:59px;width:1px;height:386px;background:#343434"></div>
<div class="a" style="left:233px;top:59px;width:1px;height:386px;background:#343434"></div>
<div class="a" style="left:257px;top:59px;width:1px;height:386px;background:#343434"></div>
<div class="a" style="left:269px;top:59px;width:1px;height:386px;background:#343434"></div>
<div class="a" style="left:281px;top:59px;width:1px;height:386px;background:#343434"></div>
<div class="a" style="left:293px;top:59px;width:1px;height:386px;background:#343434"></div>
<div class="a" style="left:317px;top:59px;width:1px;height:386px;background:#343434"></div>
<div class="a" style="left:329px;top:59px;width:1px;height:386px;background:#343434"></div>
<div class="a" style="left:341px;top:59px;width:1px;height:386px;background:#343434"></div>
<div class="a" style="left:353px;top:59px;width:1px;height:386px;background:#343434"></div>
<div class="a" style="left:377px;top:59px;width:1px;height:386px;background:#343434"></div>
<div class="a" style="left:389px;top:59px;width:1px;height:386px;background:#343434"></div>
<div class="a" style="left:401px;top:59px;width:1px;height:386px;background:#343434"></div>
<div class="a" style="left:413px;top:59px;width:1px;height:386px;background:#343434"></div>
<div class="a" style="left:437px;top:59px;width:1px;height:386px;background:#343434"></div>
<div class="a" style="left:449px;top:59px;width:1px;height:386px;background:#343434"></div>
<div class="a" style="left:461px;top:59px;width:1px;height:386px;background:#343434"></div>
<div class="a" style="left:473px;top:59px;width:1px;height:386px;background:#343434"></div>
<div class="a" style="left:497px;top:59px;width:1px;height:386px;background:#343434"></div>
<div class="a" style="left:509px;top:59px;width:1px;height:386px;background:#343434"></div>
<div class="a" style="left:521px;top:59px;width:1px;height:386px;background:#343434"></div>
<div class="a" style="left:533px;top:59px;width:1px;height:386px;background:#343434"></div>
<div class="a" style="left:557px;top:59px;width:1px;height:386px;background:#343434"></div>
<div class="a" style="left:569px;top:59px;width:1px;height:386px;background:#343434"></div>
<div class="a" style="left:581px;top:59px;width:1px;height:386px;background:#343434"></div>
<div class="a" style="left:593px;top:59px;width:1px;height:386px;background:#343434"></div>
<div class="a" style="left:617px;top:59px;width:1px;height:386px;background:#343434"></div>
<div class="a" style="left:629px;top:59px;width:1px;height:386px;background:#343434"></div>
<div class="a" style="left:407px;top:119px;width:233px;height:1px;background:#454545"></div>
<div class="a" style="left:407px;top:179px;width:233px;height:1px;background:#454545"></div>
<div class="a" style="left:407px;top:239px;width:233px;height:1px;background:#454545"></div>
<div class="a" style="left:407px;top:299px;width:233px;height:1px;background:#454545"></div>
<div class="a" style="left:407px;top:359px;width:233px;height:1px;background:#454545"></div>
<div class="a" style="left:407px;top:419px;width:233px;height:1px;background:#454545"></div>
<div class="a" style="left:245px;top:59px;width:1px;height:386px;background:#454545"></div>
<div class="a" style="left:305px;top:59px;width:1px;height:386px;background:#454545"></div>
<div class="a" style="left:365px;top:59px;width:1px;height:386px;background:#454545"></div>
<div class="a" style="left:425px;top:59px;width:1px;height:386px;background:#454545"></div>
<div class="a" style="left:485px;top:59px;width:1px;height:386px;background:#454545"></div>
<div class="a" style="left:545px;top:59px;width:1px;height:386px;background:#454545"></div>
<div class="a" style="left:605px;top:59px;width:1px;height:386px;background:#454545"></div>
<div class="a" style="left:178px;top:50.8px;width:473px;height:1.2px;background:#141414;"></div>
<div class="a" style="left:178px;top:52px;width:472.7px;height:7.4px;background:#595959;"></div>
<div class="a" style="left:178px;top:51.9px;width:7.3px;height:393px;background:#555;"></div>
<div class="a" style="left:640.3px;top:59.7px;width:10.4px;height:385.3px;background:#f1f1f1;"></div>
<div class="a" style="left:642px;top:70.1px;width:7px;height:360.7px;background:#c1c1c1;"></div>
<svg class="a" style="left:642px;top:62px;" width="7" height="5" viewBox="0 0 7 5"><path d="M0.5 4 H6.5 L3.5 0.8 Z" fill="#505050"/></svg>
<svg class="a" style="left:642px;top:437.5px;" width="7" height="5" viewBox="0 0 7 5"><path d="M0.5 1 H6.5 L3.5 4.2 Z" fill="#505050"/></svg>
<div class="a" style="left:185.5px;top:59.4px;width:216.2px;height:384px;background:#ffffff;"></div>
<div class="a" style="left:185.5px;top:59.4px;width:216.2px;height:28.3px;background:#2196f3;"></div>
<div class="a t" style="left:194.50px;top:70.56px;font-size:10.26px;line-height:10.26px;color:#ffffff;transform:scaleX(0.854);transform-origin:0 0;-webkit-text-stroke:0.12px #ffffff;">HR Contacts</div>
<div class="a" style="left:188.3px;top:90.6px;width:210.3px;height:61px;background:transparent;border:1px solid #ececec;"></div>
<div class="a" style="left:191.3px;top:93.3px;width:204.3px;height:54.7px;background:transparent;border:1px dotted #e6e6e6;"></div>
<div class="a" style="left:231.3px;top:93.3px;width:0px;height:54.7px;background:transparent;border-left:1px dotted #d4d4d4;"></div>
<div class="a" style="left:378.6px;top:93.3px;width:0px;height:54.7px;background:transparent;border-left:1px dotted #d4d4d4;"></div>
<svg class="a" style="left:196px;top:99px;" width="25" height="24" viewBox="0 0 25 24"><circle cx="12.3" cy="6.7" r="5.8" fill="#555"/><path d="M1 23.5 V20 C1 16 8 14.5 12.3 14.5 C16.6 14.5 23.6 16 23.6 20 V23.5 Z" fill="#555"/></svg>
<svg class="a" style="left:380px;top:95px;" width="15" height="15" viewBox="0 0 15 15"><path d="M2.2 1 C1 1.8 0.6 3 1 4.5 C2.5 9 6 12.5 10.5 14 C12 14.4 13.2 14 14 12.8 L13.6 11.2 L11 10 L9.4 11.3 C7.2 10.4 4.6 7.8 3.7 5.6 L5 4 L3.8 1.4 Z" fill="#444"/></svg>
<div class="a t" style="left:244.50px;top:96.44px;font-size:12.42px;line-height:12.42px;color:#6a6a6a;transform:scaleX(0.965);transform-origin:0 0;-webkit-text-stroke:0px;">Name</div>
<div class="a" style="left:243.5px;top:96.8px;width:4px;height:4px;background:#555;border-radius:50%;"></div>
<div class="a" style="left:242.9px;top:103.2px;width:134.4px;height:7.1px;background:#2196f3;"></div>
<svg class="a" style="left:243.8px;top:103.3px;" width="7" height="7" viewBox="0 0 7 7"><path d="M3.5 0.8 V6.2 M0.8 3.5 H6.2" stroke="#fff" stroke-width="1"/><path d="M3.5 0 L5 1.6 H2 Z M3.5 7 L5 5.4 H2 Z M0 3.5 L1.6 2 V5 Z M7 3.5 L5.4 2 V5 Z" fill="#fff"/></svg>
<div class="a t" style="left:253.90px;top:103.71px;font-size:7.13px;line-height:7.13px;color:#ffffff;font-weight:bold;transform:scaleX(0.713);transform-origin:0 0;-webkit-text-stroke:0.12px #ffffff;">JobTitle</div>
<div class="a" style="left:242.9px;top:110.3px;width:134.4px;height:12.2px;background:transparent;border:1px dashed #c4e0f8;border-top:none;"></div>
<svg class="a" style="left:242.3px;top:113.2px;" width="8" height="8" viewBox="0 0 8 8"><circle cx="4" cy="4" r="3.7" fill="#333"/><path d="M5.5 2.5 L2.5 5.5" stroke="#fff" stroke-width="1.1"/></svg>
<div class="a t" style="left:250.80px;top:111.65px;font-size:10.04px;line-height:10.04px;color:#a6a6a6;transform:scaleX(0.874);transform-origin:0 0;-webkit-text-stroke:0px;">JobTitle</div>
<div class="a" style="left:238.4px;top:100.1px;width:55px;height:29.6px;background:transparent;border:2px solid #f66c1e;"></div>
<div class="a" style="left:185.5px;top:151.6px;width:216.2px;height:1px;background:#eeeeee;"></div>
<div class="a t" style="left:170.4px;top:58.9px;width:20px;height:5px;line-height:5px;font-size:5px;color:#363636;text-align:center;transform:rotate(90deg)">0</div>
<div class="a t" style="left:170.4px;top:90.6px;width:20px;height:5px;line-height:5px;font-size:5px;color:#363636;text-align:center;transform:rotate(90deg)">50</div>
<div class="a t" style="left:170.4px;top:120.8px;width:20px;height:5px;line-height:5px;font-size:5px;color:#363636;text-align:center;transform:rotate(90deg)">100</div>
<div class="a t" style="left:170.4px;top:150.9px;width:20px;height:5px;line-height:5px;font-size:5px;color:#363636;text-align:center;transform:rotate(90deg)">150</div>
<div class="a t" style="left:170.4px;top:181.0px;width:20px;height:5px;line-height:5px;font-size:5px;color:#363636;text-align:center;transform:rotate(90deg)">200</div>
<div class="a t" style="left:170.4px;top:211.2px;width:20px;height:5px;line-height:5px;font-size:5px;color:#363636;text-align:center;transform:rotate(90deg)">250</div>
<div class="a t" style="left:170.4px;top:241.3px;width:20px;height:5px;line-height:5px;font-size:5px;color:#363636;text-align:center;transform:rotate(90deg)">300</div>
<div class="a t" style="left:170.4px;top:271.4px;width:20px;height:5px;line-height:5px;font-size:5px;color:#363636;text-align:center;transform:rotate(90deg)">350</div>
<div class="a t" style="left:170.4px;top:301.5px;width:20px;height:5px;line-height:5px;font-size:5px;color:#363636;text-align:center;transform:rotate(90deg)">400</div>
<div class="a t" style="left:170.4px;top:331.7px;width:20px;height:5px;line-height:5px;font-size:5px;color:#363636;text-align:center;transform:rotate(90deg)">450</div>
<div class="a t" style="left:170.4px;top:361.8px;width:20px;height:5px;line-height:5px;font-size:5px;color:#363636;text-align:center;transform:rotate(90deg)">500</div>
<div class="a t" style="left:170.4px;top:391.9px;width:20px;height:5px;line-height:5px;font-size:5px;color:#363636;text-align:center;transform:rotate(90deg)">550</div>
<div class="a t" style="left:170.4px;top:422.1px;width:20px;height:5px;line-height:5px;font-size:5px;color:#363636;text-align:center;transform:rotate(90deg)">600</div>
<div class="a" style="left:178px;top:443.4px;width:462.3px;height:1.1px;background:#2a2a2a;"></div>
<div class="a" style="left:178px;top:444.5px;width:462.3px;height:1.5px;background:#505050;"></div>
<div class="a" style="left:640.3px;top:443px;width:10.4px;height:2.6px;background:#f1f1f1;"></div>
<div class="a" style="left:178px;top:446px;width:473px;height:15px;background:#2b2b2b;"></div>
<div class="a" style="left:178px;top:459.5px;width:473px;height:1.5px;background:#222;"></div>
<div class="a t" style="left:194.60px;top:447.93px;font-size:8.53px;line-height:8.53px;color:#d0d0d0;transform:scaleX(0.860);transform-origin:0 0;-webkit-text-stroke:0.12px #d0d0d0;">mainpage</div>
<div class="a t" style="left:243.20px;top:447.93px;font-size:8.53px;line-height:8.53px;color:#d0d0d0;transform:scaleX(0.841);transform-origin:0 0;-webkit-text-stroke:0.12px #d0d0d0;">content1</div>
<div class="a t" style="left:287.70px;top:447.93px;font-size:8.53px;line-height:8.53px;color:#d0d0d0;transform:scaleX(0.829);transform-origin:0 0;-webkit-text-stroke:0.12px #d0d0d0;">page_content1</div>
<div class="a t" style="left:351.80px;top:447.93px;font-size:8.53px;line-height:8.53px;color:#d0d0d0;transform:scaleX(0.826);transform-origin:0 0;-webkit-text-stroke:0.12px #d0d0d0;">EmployeeList1</div>
<div class="a t" style="left:415.20px;top:447.93px;font-size:8.53px;line-height:8.53px;color:#d0d0d0;transform:scaleX(0.856);transform-origin:0 0;-webkit-text-stroke:0.12px #d0d0d0;">listtemplate1</div>
<div class="a t" style="left:473.20px;top:447.93px;font-size:8.53px;line-height:8.53px;color:#d0d0d0;transform:scaleX(0.846);transform-origin:0 0;-webkit-text-stroke:0.12px #d0d0d0;">container2</div>
<div class="a t" style="left:523.90px;top:447.93px;font-size:8.53px;line-height:8.53px;color:#2196f3;transform:scaleX(0.859);transform-origin:0 0;-webkit-text-stroke:0.12px #2196f3;">JobTitle</div>
<svg class="a" style="left:233px;top:450px;" width="5" height="7" viewBox="0 0 5 7"><path d="M1 0.8 L3.8 3.5 L1 6.2" stroke="#ccc" stroke-width="1" fill="none"/></svg>
<svg class="a" style="left:277.8px;top:450px;" width="5" height="7" viewBox="0 0 5 7"><path d="M1 0.8 L3.8 3.5 L1 6.2" stroke="#ccc" stroke-width="1" fill="none"/></svg>
<svg class="a" style="left:342.4px;top:450px;" width="5" height="7" viewBox="0 0 5 7"><path d="M1 0.8 L3.8 3.5 L1 6.2" stroke="#ccc" stroke-width="1" fill="none"/></svg>
<svg class="a" style="left:405px;top:450px;" width="5" height="7" viewBox="0 0 5 7"><path d="M1 0.8 L3.8 3.5 L1 6.2" stroke="#ccc" stroke-width="1" fill="none"/></svg>
<svg class="a" style="left:463.4px;top:450px;" width="5" height="7" viewBox="0 0 5 7"><path d="M1 0.8 L3.8 3.5 L1 6.2" stroke="#ccc" stroke-width="1" fill="none"/></svg>
<svg class="a" style="left:513.6px;top:450px;" width="5" height="7" viewBox="0 0 5 7"><path d="M1 0.8 L3.8 3.5 L1 6.2" stroke="#ccc" stroke-width="1" fill="none"/></svg>
<div class="a" style="left:650.5px;top:29px;width:1.2px;height:432px;background:#1e1e1e;"></div>
<div class="a" style="left:651.7px;top:29px;width:168.3px;height:432px;background:#404040;"></div>
<div class="a" style="left:819px;top:29px;width:1px;height:432px;background:#2e2e2e;"></div>
<div class="a" style="left:651.7px;top:29px;width:168.3px;height:22px;background:#454545;"></div>
<div class="a t" style="left:658.74px;top:35.15px;font-size:10.04px;line-height:10.04px;color:#dddddd;transform:scaleX(0.850);transform-origin:0 0;-webkit-text-stroke:0.12px #dddddd;">wm-label: JobTitle</div>
<div class="a" style="left:651.7px;top:51px;width:168.3px;height:21.7px;background:#111111;"></div>
<div class="a" style="left:651.7px;top:51px;width:33.2px;height:21.7px;background:#3a3a3a;"></div>
<div class="a" style="left:651.7px;top:51px;width:33.2px;height:2px;background:#2196f3;"></div>
<svg class="a" style="left:663px;top:56.6px;" width="10" height="12" viewBox="0 0 10 12"><path d="M7.3 1 L9.2 2.5 L3.5 10.5 L1.2 11.3 L1.6 8.8 Z" fill="#f0f0f0"/></svg>
<svg class="a" style="left:696px;top:57.3px;" width="12" height="12" viewBox="0 0 12 12"><g stroke="#a0a0a0" stroke-width="0.9" fill="none"><path d="M6 1 C2.5 1 1 3.5 1 6 C1 9 3 11 6 11 C7.5 11 7 9.5 6.5 9 C6 8 7 7.5 8 7.5 C10 7.5 11 6.5 11 5 C11 2.5 9 1 6 1 Z"/><circle cx="3.5" cy="5.5" r="0.8"/><circle cx="5" cy="3.3" r="0.8"/><path d="M11.5 1.5 L6.5 7.5"/></g></svg>
<svg class="a" style="left:729.5px;top:57.3px;" width="13" height="12" viewBox="0 0 13 12"><g stroke="#a0a0a0" stroke-width="0.9" fill="none" stroke-linejoin="round"><path d="M7.6 5.2 A3.7 3.7 0 1 0 5 7.8"/><path d="M5.6 5.6 L11.6 8.1 L9.1 9.1 L8.1 11.6 Z"/><path d="M9.1 9.1 L11.4 11.4"/></g></svg>
<svg class="a" style="left:763px;top:59.5px;" width="13" height="8" viewBox="0 0 13 8"><g stroke="#a0a0a0" stroke-width="0.9" fill="none"><path d="M8.2 6.2 H1.5 C0.9 6.2 0.5 5.8 0.5 5.2 V1.5 C0.5 0.9 0.9 0.5 1.5 0.5 H8.5 C9.1 0.5 9.5 0.9 9.5 1.5 V2"/><rect x="8.3" y="2.3" width="3.6" height="5" rx="0.7"/></g></svg>
<svg class="a" style="left:797px;top:55px;" width="11" height="13" viewBox="0 0 11 13"><path d="M5.5 1 L10 2.6 V6.5 C10 9.5 8 11.2 5.5 12.2 C3 11.2 1 9.5 1 6.5 V2.6 Z" stroke="#a0a0a0" stroke-width="0.9" fill="none"/></svg>
<div class="a" style="left:656px;top:78.5px;width:159px;height:17px;background:#2d2d2d;border:1px solid #555;border-radius:2px;"></div>
<svg class="a" style="left:661px;top:82.5px;" width="9" height="9" viewBox="0 0 9 9"><circle cx="4.4" cy="4.5" r="3" stroke="#d0d0d0" stroke-width="1" fill="none"/><path d="M6.4 6.6 L8 8.2" stroke="#d0d0d0" stroke-width="1.1"/></svg>
<div class="a t" style="left:671.80px;top:83.89px;font-size:7.99px;line-height:7.99px;color:#8a8a8a;transform:scaleX(0.788);transform-origin:0 0;-webkit-text-stroke:0.12px #8a8a8a;">Search...</div>
<div class="a" style="left:651.7px;top:100px;width:168.3px;height:1px;background:#333;"></div>
<div class="a t" style="left:657.30px;top:107.55px;font-size:7.56px;line-height:7.56px;color:#d8d8d8;transform:scaleX(0.872);transform-origin:0 0;-webkit-text-stroke:0.12px #d8d8d8;">Caption</div>
<div class="a" style="left:656.6px;top:119.3px;width:133.4px;height:16.4px;background:#3d3d3d;border:1px solid #575757;border-radius:2px;"></div>
<div class="a t" style="left:664.10px;top:124.16px;font-size:7.78px;line-height:7.78px;color:#eeeeee;transform:scaleX(0.842);transform-origin:0 0;-webkit-text-stroke:0.12px #eeeeee;">bind:'+14084352700' +Variables.HrdbE</div>
<svg class="a" style="left:780.5px;top:123.5px;" width="8" height="8" viewBox="0 0 8 8"><path d="M0.8 0.8 L7.2 7.2 M7.2 0.8 L0.8 7.2" stroke="#ccc" stroke-width="0.9"/></svg>
<div class="a" style="left:790.9px;top:115.0px;width:16.6px;height:23.8px;background:transparent;border:2px solid #f2841f;"></div>
<svg class="a" style="left:794.7px;top:122.1px;" width="10" height="10" viewBox="0 0 10 10"><g stroke="#e0e0e0" stroke-width="1.1" fill="none" transform="rotate(-45 5 5)"><rect x="0.75" y="3.4" width="5" height="3.2" rx="1.6"/><rect x="4.25" y="3.4" width="5" height="3.2" rx="1.6"/></g></svg>
<div class="a t" style="left:657.90px;top:144.95px;font-size:7.56px;line-height:7.56px;color:#d8d8d8;transform:scaleX(0.867);transform-origin:0 0;-webkit-text-stroke:0.12px #d8d8d8;">Name</div>
<div class="a" style="left:656.6px;top:156.3px;width:134.4px;height:15.9px;background:#2b2b2b;border:1px solid #555;border-radius:2px;"></div>
<div class="a t" style="left:664.10px;top:160.86px;font-size:7.78px;line-height:7.78px;color:#eeeeee;transform:scaleX(0.887);transform-origin:0 0;-webkit-text-stroke:0.12px #eeeeee;">JobTitle</div>
<div class="a" style="left:651.7px;top:182px;width:168.3px;height:13.699999999999989px;background:#1c1c1c;"></div>
<div class="a t" style="left:657.50px;top:184.37px;font-size:9.72px;line-height:9.72px;color:#dddddd;transform:scaleX(0.770);transform-origin:0 0;-webkit-text-stroke:0.12px #dddddd;">Layout</div>
<div class="a t" style="left:657.30px;top:205.05px;font-size:7.56px;line-height:7.56px;color:#d8d8d8;transform:scaleX(1.020);transform-origin:0 0;-webkit-text-stroke:0.12px #d8d8d8;">Width</div>
<div class="a" style="left:657.3px;top:216.2px;width:133.5px;height:16.4px;background:#2b2b2b;border:1px solid #555;border-radius:2px;"></div>
<div class="a t" style="left:657.30px;top:241.65px;font-size:7.56px;line-height:7.56px;color:#d8d8d8;transform:scaleX(0.938);transform-origin:0 0;-webkit-text-stroke:0.12px #d8d8d8;">Height</div>
<div class="a" style="left:657.3px;top:253.1px;width:133.5px;height:16.6px;background:#2b2b2b;border:1px solid #555;border-radius:2px;"></div>
<div class="a" style="left:651.7px;top:278.9px;width:168.3px;height:14.0px;background:#1c1c1c;"></div>
<div class="a t" style="left:657.50px;top:281.42px;font-size:9.72px;line-height:9.72px;color:#dddddd;transform:scaleX(0.822);transform-origin:0 0;-webkit-text-stroke:0.12px #dddddd;">Validation</div>
<div class="a t" style="left:657.20px;top:302.75px;font-size:7.56px;line-height:7.56px;color:#d8d8d8;transform:scaleX(0.841);transform-origin:0 0;-webkit-text-stroke:0.12px #d8d8d8;">Required</div>
<div class="a" style="left:708px;top:300.7px;width:22.7px;height:13.7px;background:#cfcfcf;border-radius:7px;"></div>
<div class="a" style="left:708px;top:300.7px;width:13.7px;height:13.7px;background:#8e8e8e;border-radius:50%;"></div>
<div class="a" style="left:651.7px;top:322.7px;width:168.3px;height:13.900000000000034px;background:#1c1c1c;"></div>
<div class="a t" style="left:657.50px;top:325.17px;font-size:9.72px;line-height:9.72px;color:#dddddd;transform:scaleX(0.769);transform-origin:0 0;-webkit-text-stroke:0.12px #dddddd;">Behavior</div>
<div class="a t" style="left:657.20px;top:346.15px;font-size:7.56px;line-height:7.56px;color:#d8d8d8;transform:scaleX(0.871);transform-origin:0 0;-webkit-text-stroke:0.12px #d8d8d8;">Show</div>
<div class="a" style="left:709.2px;top:344.4px;width:22.7px;height:13.2px;background:#cfcfcf;border-radius:7px;"></div>
<div class="a" style="left:718.4px;top:344.4px;width:13.5px;height:13.5px;background:#2196f3;border-radius:50%;"></div>
<svg class="a" style="left:794.2px;top:345.2px;" width="10" height="10" viewBox="0 0 10 10"><g stroke="#cccccc" stroke-width="1.1" fill="none" transform="rotate(-45 5 5)"><rect x="0.75" y="3.4" width="5" height="3.2" rx="1.6"/><rect x="4.25" y="3.4" width="5" height="3.2" rx="1.6"/></g></svg>
<div class="a t" style="left:657.20px;top:366.45px;font-size:7.56px;line-height:7.56px;color:#d8d8d8;transform:scaleX(0.878);transform-origin:0 0;-webkit-text-stroke:0.12px #d8d8d8;">Animation</div>
<div class="a" style="left:657.6px;top:377.9px;width:132.8px;height:16.4px;background:#2b2b2b;border:1px solid #555;border-radius:2px;"></div>
<svg class="a" style="left:782px;top:383.5px;" width="6" height="5" viewBox="0 0 6 5"><path d="M0.3 0.5 H5.3 L2.8 4.5 Z" fill="#eee"/></svg>
</body></html>
